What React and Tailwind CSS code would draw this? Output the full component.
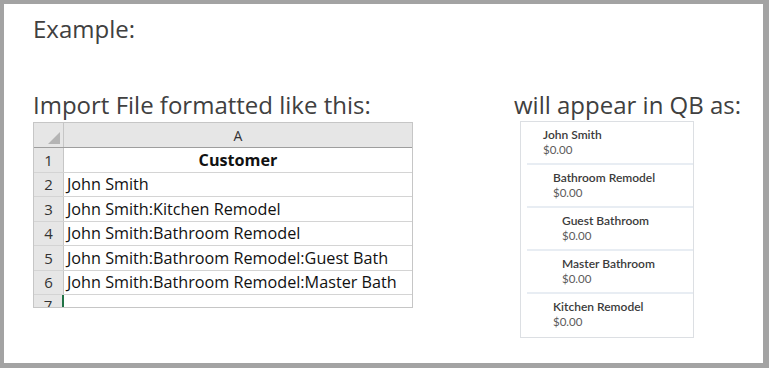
import React from "react";

const rows = [
  { n: 1, text: "Customer", head: true },
  { n: 2, text: "John Smith" },
  { n: 3, text: "John Smith:Kitchen Remodel" },
  { n: 4, text: "John Smith:Bathroom Remodel" },
  { n: 5, text: "John Smith:Bathroom Remodel:Guest Bath" },
  { n: 6, text: "John Smith:Bathroom Remodel:Master Bath" },
];

const customers = [
  { name: "John Smith", pad: "pl-[16px]" },
  { name: "Bathroom Remodel", pad: "pl-[26px]" },
  { name: "Guest Bathroom", pad: "pl-[35px]" },
  { name: "Master Bathroom", pad: "pl-[35px]" },
  { name: "Kitchen Remodel", pad: "pl-[26px]" },
];

function Sheet() {
  return (
    <div className="w-[380px] border border-[#c6c6c6] font-['Open_Sans',sans-serif] text-[16.2px] text-[#111]">
      <div className="flex h-[25px] bg-[#e6e6e6] border-b border-[#9e9e9e]">
        <div className="w-[30px] border-r border-[#c6c6c6] flex items-end justify-end p-[3px]">
          <div className="w-0 h-0 border-l-[12px] border-l-transparent border-b-[12px] border-b-[#b4b4b4]" />
        </div>
        <div className="flex-1 flex items-center justify-center text-[14px] text-[#333]">A</div>
      </div>
      {rows.map((r) => (
        <div key={r.n} className="flex h-[24.5px] border-b border-[#d4d4d4]">
          <div className="w-[30px] bg-[#e6e6e6] border-r border-[#c6c6c6] flex items-center justify-center text-[15px] text-[#333]">
            {r.n}
          </div>
          <div
            className={
              r.head
                ? "flex-1 flex items-center justify-center font-bold"
                : "flex-1 flex items-center pl-[3px]"
            }
          >
            {r.text}
          </div>
        </div>
      ))}
      {/* row 7 is only partly visible, the sheet is cropped here */}
      <div className="flex h-[12px] overflow-hidden">
        <div className="w-[30px] bg-[#e6e6e6] border-r-2 border-[#217346] flex justify-center text-[15px] leading-[20px] text-[#333]">
          7
        </div>
        <div className="flex-1" />
      </div>
    </div>
  );
}

function QbList() {
  return (
    <div className="w-[174px] border border-[#dcdfe3] font-['Lato',sans-serif]">
      {customers.map((c, i) => (
        <div key={c.name} className="pl-[6px]">
          <div
            className={
              "h-[43px] pt-[5px] leading-[15px] " +
              c.pad +
              (i < customers.length - 1 ? " border-b-2 border-[#e8edf3]" : "")
            }
          >
            <div className="font-semibold text-[12px] text-[#3b3b3b]">{c.name}</div>
            <div className="text-[11.5px] text-[#5b5b5b]">$0.00</div>
          </div>
        </div>
      ))}
    </div>
  );
}

export default function App() {
  return (
    <div className="w-[769px] h-[368px] bg-[#a3a3a3] pl-[4px] pt-[4px] pr-[6px] pb-[5px]">
      <div className="h-full bg-white pl-[29px] pt-[10px] font-['Open_Sans',sans-serif] text-[#404040]">
        <div className="text-[24px] leading-[30px]">Example:</div>
        <div className="flex mt-[46px]">
          <div>
            <div className="text-[24px] leading-[30px] mb-[2px] whitespace-nowrap">Import File formatted like this:</div>
            <Sheet />
          </div>
          <div className="ml-[101px]">
            <div className="text-[24px] leading-[30px] mb-[1px] whitespace-nowrap">will appear in QB as:</div>
            <div className="pl-[6px]">
              <QbList />
            </div>
          </div>
        </div>
      </div>
    </div>
  );
}
